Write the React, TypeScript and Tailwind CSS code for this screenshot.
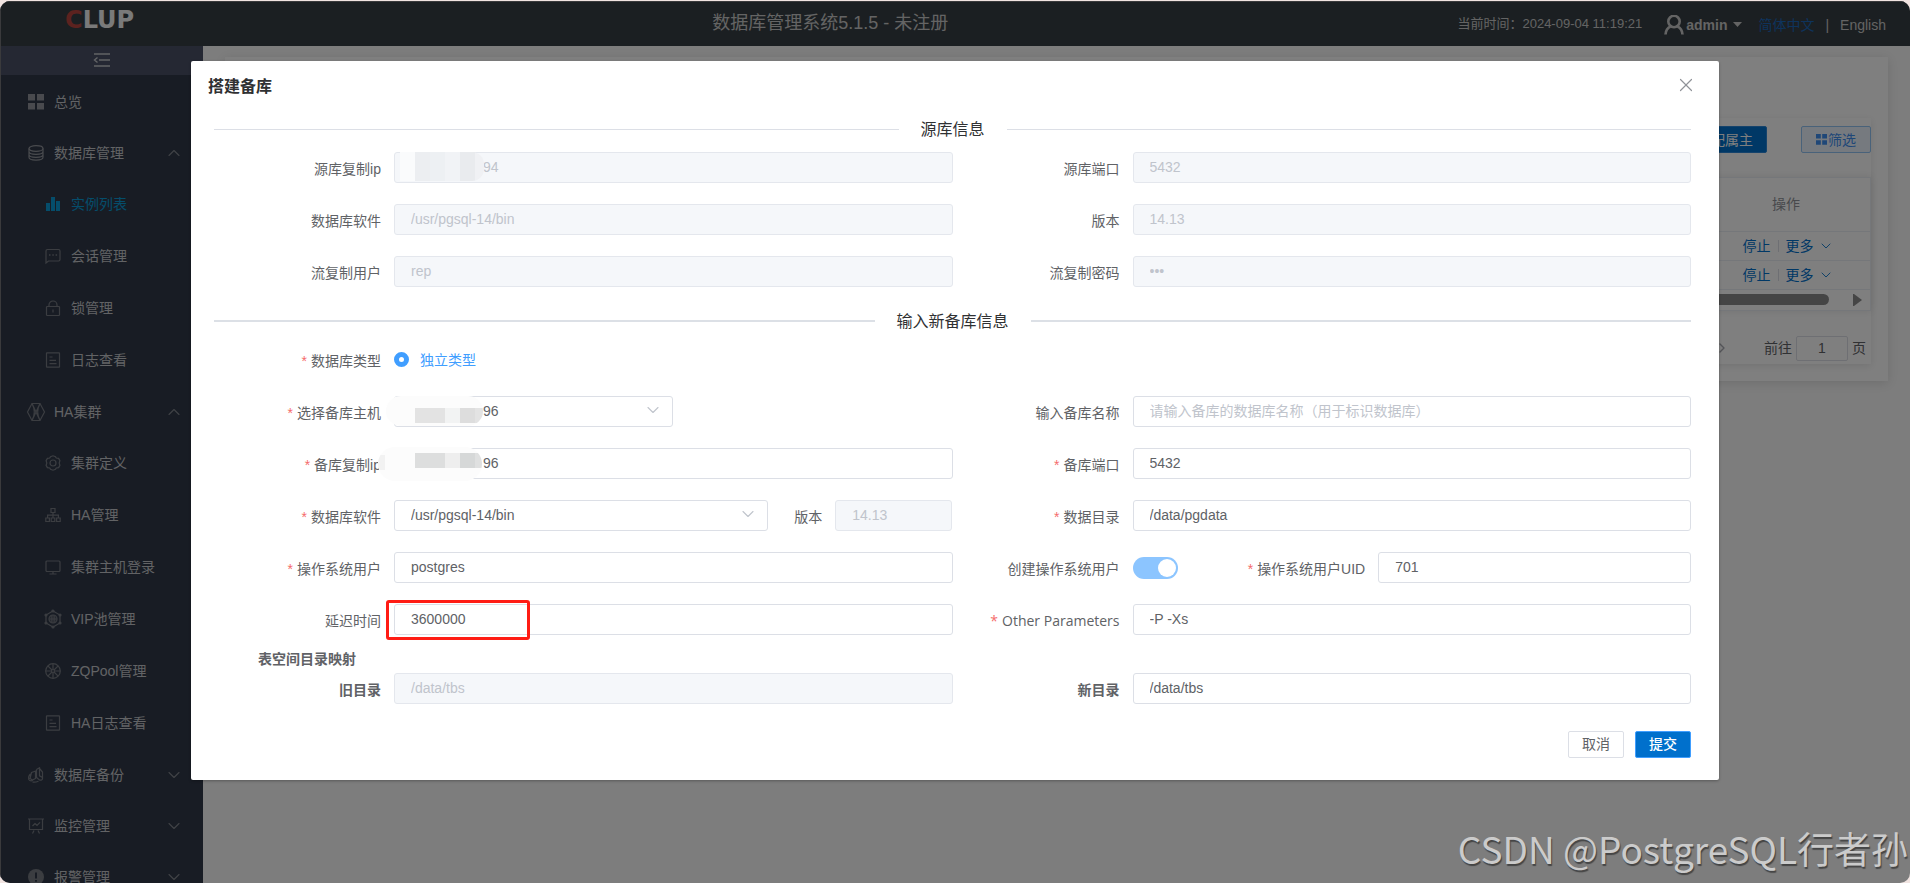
import type { ReactNode } from "react";
import { ChevronDown, ChevronRight, ChevronUp, X } from "lucide-react";
import clsx from "clsx";

const icons: Record<string, ReactNode> = {
  grid: <path d="M0 0h7v6.500H0zM9 0h7v6.500H9zM0 9h7v6.500H0zM9 9h7v6.500H9z" fill="currentColor" stroke="none" />,
  database: (
    <>
      <ellipse cx="8" cy="3.500" rx="7" ry="2.800" />
      <path d="M1 3.500v3c0 1.500 3 2.800 7 2.800s7-1.300 7-2.800v-3M1 6.500v3c0 1.500 3 2.800 7 2.800s7-1.300 7-2.800v-3M1 9.500v2.800c0 1.500 3 2.800 7 2.800s7-1.300 7-2.800V9.500" />
    </>
  ),
  bars: <path d="M1 7h4v8H1zM6 1h4v14H6zM11 5h4v10h-4z" fill="currentColor" stroke="none" />,
  chat: (
    <>
      <path d="M1 15V3a1.500 1.500 0 0 1 1.500-1.500h11A1.500 1.500 0 0 1 15 3v8.500a1.500 1.500 0 0 1-1.500 1.500H3.500z" />
      <path d="M4 7h1.500M7.300 7h1.500M10.600 7h1.500" strokeWidth="1.600" />
    </>
  ),
  lock: (
    <>
      <rect x="1.500" y="6.500" width="13" height="9" rx="0.800" />
      <path d="M4 6.500V5a4 4 0 0 1 8 0v1.500M8 9.500v3" />
    </>
  ),
  doc: (
    <>
      <rect x="1.500" y="0.800" width="13" height="14.400" rx="0.500" />
      <path d="M4.500 5h3M4.500 8.300h6.500M4.500 11.600h7" />
    </>
  ),
  cluster: (
    <>
      <path d="M4-.5h8L16.500 8 12 16.500H4L-.5 8z" />
      <path d="M4-.5l8 17M12-.5l-8 17M4-.5C7 5 7 11 4 16.500M12-.5C9 5 9 11 12 16.500" />
    </>
  ),
  gear: (
    <>
      <path d="M5.500 1.800 8 .8l2.500 1 .8 1.200 2.300.4 1.300 2.200-.7 2.400.7 2.400-1.300 2.200-2.300.4-.8 1.200-2.500 1-2.500-1-.8-1.200-2.300-.4L1.100 10.400 1.800 8l-.7-2.400 1.300-2.200 2.300-.4z" />
      <circle cx="8" cy="8" r="3" />
    </>
  ),
  tree: (
    <>
      <path d="M6 1.500h4v4H6zM.8 11h3.600v3.500H.8zM6.200 11h3.600v3.500H6.200zM11.600 11h3.600v3.500h-3.600z" />
      <path d="M8 5.500V11M2.600 11V8.200h10.800V11" />
    </>
  ),
  monitor: (
    <>
      <rect x="1" y="2" width="14" height="10.500" rx="1" />
      <path d="M8 12.500V15M4.500 15h7" />
    </>
  ),
  pool: (
    <>
      <path d="M8 0l7 4v8l-7 4-7-4V4z" />
      <circle cx="8" cy="8" r="4" />
      <path d="M4 8h8M8 4v8M6.200 4.500v7M9.800 4.500v7" />
      <g fill="currentColor">
        <circle cx="8" cy="0" r="1" />
        <circle cx="15" cy="4" r="1" />
        <circle cx="15" cy="12" r="1" />
        <circle cx="8" cy="16" r="1" />
        <circle cx="1" cy="12" r="1" />
        <circle cx="1" cy="4" r="1" />
      </g>
    </>
  ),
  wheel: (
    <>
      <circle cx="8" cy="8" r="7.300" />
      <circle cx="8" cy="8" r="1.500" />
      <path d="M8 .7v5.800M8 9.500v5.800M.7 8h5.800M9.500 8h5.800M2.800 2.800 7 7M9 9l4.200 4.200M13.200 2.800 9 7M7 9l-4.200 4.200" />
    </>
  ),
  backup: (
    <>
      <path d="M3.500 5.500 7.500 4v7.500l-3 1.500-2.500-1.500zM2.500 7C.8 8.500.3 10.500.8 12.500c.8 1.300 2.500 1.500 4 1M8.500 2.500l3-1.700v8l3.500 2M11.500 1.500l3 3.500v6.500c0 1.500-1.500 2-3 1.500l-3-2.500v-8M4.500 15c2 .5 4 0 6-.8" />
    </>
  ),
  board: (
    <>
      <path d="M0 1h16M1.500 1v10.500h13V1M4.500 15.500l1.500-3M11.500 15.500l-1.500-3" />
      <path d="M4.500 8 7 5.500l2 1.800L12 4.300" />
    </>
  ),
  alert: (
    <>
      <circle cx="8" cy="8" r="8" fill="currentColor" stroke="none" />
      <path d="M8 3.500v6M8 11v1.800" stroke="#303949" strokeWidth="2" />
    </>
  ),
};

function Icon({ name, className }: { name: string; className?: string }) {
  return (
    <svg viewBox="0 0 16 16" className={clsx("size-4 shrink-0 overflow-visible", className)} fill="none" stroke="currentColor" strokeWidth="1.200">
      {icons[name]}
    </svg>
  );
}

type MenuItem = { label: string; icon: string; sub?: boolean; active?: boolean; arrow?: "up" | "down"; bright?: boolean };

const menu: MenuItem[] = [
  { label: "总览", icon: "grid", bright: true },
  { label: "数据库管理", icon: "database", arrow: "up", bright: true },
  { label: "实例列表", icon: "bars", sub: true, active: true },
  { label: "会话管理", icon: "chat", sub: true },
  { label: "锁管理", icon: "lock", sub: true },
  { label: "日志查看", icon: "doc", sub: true },
  { label: "HA集群", icon: "cluster", arrow: "up" },
  { label: "集群定义", icon: "gear", sub: true },
  { label: "HA管理", icon: "tree", sub: true },
  { label: "集群主机登录", icon: "monitor", sub: true },
  { label: "VIP池管理", icon: "pool", sub: true },
  { label: "ZQPool管理", icon: "wheel", sub: true },
  { label: "HA日志查看", icon: "doc", sub: true },
  { label: "数据库备份", icon: "backup", arrow: "down" },
  { label: "监控管理", icon: "board", arrow: "down" },
  { label: "报警管理", icon: "alert", arrow: "down" },
];

function Sidebar() {
  return (
    <aside className="w-[203px] shrink-0 overflow-hidden bg-[#303949] text-[#c4c6ca]">
      <button type="button" aria-label="收起菜单" className="flex h-[29px] w-full items-center justify-center bg-[#4a5067] pb-px">
        <svg viewBox="0 0 18 14" className="h-3.5 w-[18px]" fill="none" stroke="currentColor" strokeWidth="1.400">
          <path d="M1 1h16M6 7h11M1 13h16M4.500 4.500 1.500 7l3 2.500" />
        </svg>
      </button>
      <nav className="pt-px">
        {menu.map((item) => (
          <a
            key={item.label}
            href="#"
            className={clsx(
              "flex items-center gap-[10px] pr-[19px]",
              item.sub ? "h-[52px] pl-[45px]" : "h-[51px] pl-7",
              item.active && "text-[#0a9ad6]"
            )}
          >
            <Icon name={item.icon} className={clsx(!item.active && (item.bright ? "text-[#92959c]" : "text-[#777b83]"))} />
            <span className="flex-1">{item.label}</span>
            {item.arrow === "up" && <ChevronUp className="size-5 text-[#80848c]" strokeWidth={1.3} />}
            {item.arrow === "down" && <ChevronDown className="size-5 text-[#80848c]" strokeWidth={1.3} />}
          </a>
        ))}
      </nav>
    </aside>
  );
}

function Header() {
  return (
    <header className="flex h-[45px] shrink-0 items-center bg-[#373f44] pr-6 text-[#c8c8c8]">
      <div className="w-[203px] pb-2 pl-[65px] font-['DejaVu_Sans'] text-2xl leading-6 font-bold text-[#f4f4f4]">
        <span className="text-[#b8443f]">C</span>LUP
      </div>
      <h1 className="flex-1 pb-0.5 text-center text-lg leading-6">数据库管理系统5.1.5 - 未注册</h1>
      <div className="flex items-center pt-0.5">
        <span className="text-[13px]">当前时间：2024-09-04 11:19:21</span>
        <button type="button" className="ml-[22px] flex items-center gap-0.5 font-bold">
          <svg viewBox="0 0 20 20" className="size-5" fill="none" stroke="currentColor" strokeWidth="2.600">
            <circle cx="10" cy="6.500" r="5.700" />
            <path d="M1.500 19.500c.3-4 2.200-6.800 5-8M18.500 19.500c-.3-4-2.200-6.800-5-8" />
          </svg>
          admin
          <svg viewBox="0 0 9 5" className="ml-1 h-[5px] w-[9px]" fill="currentColor">
            <path d="M0 0h9L4.500 5z" />
          </svg>
        </button>
        <a href="#" className="ml-4 text-[#1c66b8]">简体中文</a>
        <span className="mx-[11px]">|</span>
        <a href="#">English</a>
      </div>
    </header>
  );
}

function InstanceList() {
  return (
    <main className="min-w-0 flex-1 bg-[#fafafa] px-[22px] pt-[11px]">
      <section className="bg-white px-[17px] pt-[61px] pb-[17px] shadow-[0_2px_10px_rgba(0,0,0,0.12)]">
        <div className="pt-2 pb-[3px] shadow-[0_2px_8px_rgba(0,0,0,0.1)]">
          <div className="flex justify-end gap-[34px]">
            <button type="button" className="h-[27px] rounded-xs border border-[#2a86d8] bg-[#0070cc] px-[13px] text-white">分配属主</button>
            <button type="button" className="flex h-[27px] w-[70px] items-center justify-center gap-px rounded-xs border border-[#93c4f5] bg-[#ecf5ff] text-[#3f8ff0]">
              <Icon name="grid" className="size-[11px]!" />
              筛选
            </button>
          </div>
          <div className="mt-6 border border-[#ebeef5] shadow-[0_0_8px_rgba(0,0,0,0.1)]">
            <table className="w-full border-collapse text-center">
              <thead>
                <tr className="h-[53px] border-b border-[#ebeef5] text-[#909399]">
                  <td />
                  <th className="w-[168px] font-normal">操作</th>
                </tr>
              </thead>
              <tbody>
                {[1, 2].map((row) => (
                  <tr key={row} className="h-[29px] border-b border-[#ebeef5] text-[#0070cc]">
                    <td />
                    <td>
                      <div className="flex items-center justify-center pl-1">
                        <button type="button">停止</button>
                        <span className="mx-[7px] h-3 w-px bg-[#dcdfe6]" />
                        <button type="button" className="flex items-center gap-1">
                          更多
                          <ChevronDown className="size-4" strokeWidth={1.3} />
                        </button>
                      </div>
                    </td>
                  </tr>
                ))}
              </tbody>
            </table>
            <div className="flex h-5 items-center gap-6 pr-2">
              <div className="h-[11px] flex-1 rounded-full bg-[#8b8b8b]" />
              <svg viewBox="0 0 9 12" className="h-3 w-[9px]" fill="#8b8b8b">
                <path d="M0 0h1l8 6-8 6H0z" />
              </svg>
            </div>
          </div>
          <div className="mt-[25px] flex h-[25px] items-center justify-end pr-[5px] text-[#606266]">
            <ChevronRight className="mr-[34px] size-4 text-[#a8abb2]" />
            <label htmlFor="page">前往</label>
            <input id="page" defaultValue="1" className="mx-1 h-[25px] w-[52px] rounded-xs border border-[#dcdfe6] bg-white text-center" />
            <span>页</span>
          </div>
        </div>
      </section>
    </main>
  );
}

function Divider({ children, thick }: { children: ReactNode; thick?: boolean }) {
  const line = clsx("flex-1", thick ? "h-0.5 bg-[#dce0e6]" : "h-px bg-[#dcdfe6]");
  return (
    <div className="mb-[11px] flex h-6 items-center text-base text-[#303133]">
      <span className={line} />
      <h3 className="px-[22px] pt-0.5">{children}</h3>
      <span className={line} />
    </div>
  );
}

type LabelProps = { id: string; children: ReactNode; required?: boolean; bold?: boolean; className?: string };

function Label({ id, children, required, bold, className = "w-[180px]" }: LabelProps) {
  return (
    <label htmlFor={id} className={clsx("shrink-0 pt-[3px] pr-[13px] text-right whitespace-nowrap", bold && "font-bold", className)}>
      {required && <span className="mr-1 text-[#f56c6c]">*</span>}
      {children}
    </label>
  );
}

type InputProps = { id: string; value?: string; disabled?: boolean; placeholder?: string; type?: string; pad?: string; className?: string };

function Input({ id, value, disabled, placeholder, type = "text", pad = "pl-4", className = "w-full" }: InputProps) {
  return (
    <input
      id={id}
      type={type}
      defaultValue={value}
      disabled={disabled}
      placeholder={placeholder}
      className={clsx(
        "h-[31px] min-w-0 rounded-[3px] border pr-4 pb-0.5 placeholder:text-[#c0c4cc]",
        disabled ? "border-[#e4e7ed] bg-[#f5f7fa] text-[#c0c4cc]" : "border-[#dcdfe6] bg-white",
        pad,
        className
      )}
    />
  );
}

function Select({ id, value, pad = "pl-4", className }: { id: string; value: string; pad?: string; className: string }) {
  return (
    <div className={clsx("relative", className)}>
      <select id={id} className={clsx("h-[31px] w-full appearance-none rounded-[3px] border border-[#dcdfe6] bg-white pb-0.5", pad)}>
        <option>{value}</option>
      </select>
      <ChevronDown className="pointer-events-none absolute top-1 right-2.5 size-5 text-[#c0c4cc]" strokeWidth={1.3} />
    </div>
  );
}

function Field({ id, label, required, bold, children }: { id: string; label: string; required?: boolean; bold?: boolean; children: ReactNode }) {
  return (
    <div className="flex h-[31px] items-center">
      <Label id={id} required={required} bold={bold}>{label}</Label>
      <div className="relative flex min-w-0 flex-1 items-center">{children}</div>
    </div>
  );
}

/* Hides the leading part of an address */
function Mask({ blocks, className }: { blocks: string[]; className: string }) {
  return (
    <span className={clsx("pointer-events-none absolute flex overflow-hidden", className)}>
      {blocks.map((block, index) => (
        <span key={index} className={block} />
      ))}
    </span>
  );
}

function StandbyDialog() {
  return (
    <section role="dialog" aria-label="搭建备库" className="mt-[60px] w-4/5 rounded-xs bg-white pr-7 pb-[22px] pl-[23px] text-[#606266] shadow-[0_1px_3px_rgba(0,0,0,0.3)]">
      <header className="-ml-1.5 flex items-start justify-between pt-[13px]">
        <h2 className="pt-px text-base leading-6 font-bold text-[#303133]">搭建备库</h2>
        <button type="button" aria-label="关闭" className="-mr-1.5">
          <X className="size-[22px] text-[#909399]" strokeWidth={1.3} />
        </button>
      </header>

      <form className="mt-[18px]">
        <Divider>源库信息</Divider>
        <div className="grid grid-cols-2 gap-y-[21px]">
          <Field id="src-ip" label="源库复制ip">
            <Input id="src-ip" value="94" disabled pad="pl-[88px]" />
            <Mask
              className="top-0 left-1.5 h-[29px] w-[84px] rounded-r-xl"
              blocks={["w-[15px] bg-[#fafbfc]", "w-[15px] bg-[#eceef1]", "w-[15px] bg-[#edf0f3]", "w-[15px] bg-[#f1f3f6]", "w-[15px] bg-[#e9ebee]", "flex-1 bg-[#f0f1f4]"]}
            />
          </Field>
          <Field id="src-port" label="源库端口">
            <Input id="src-port" value="5432" disabled />
          </Field>
          <Field id="src-soft" label="数据库软件">
            <Input id="src-soft" value="/usr/pgsql-14/bin" disabled />
          </Field>
          <Field id="src-version" label="版本">
            <Input id="src-version" value="14.13" disabled />
          </Field>
          <Field id="rep-user" label="流复制用户">
            <Input id="rep-user" value="rep" disabled />
          </Field>
          <Field id="rep-pass" label="流复制密码">
            <Input id="rep-pass" type="password" value="rep" disabled />
          </Field>
        </div>

        <div className="h-[22px]" />
        <Divider thick>输入新备库信息</Divider>
        <div className="grid grid-cols-2 gap-y-[21px]">
          <Field id="db-type" label="数据库类型" required>
            <input id="db-type" type="radio" defaultChecked className="size-[15px] appearance-none rounded-full border-[5px] border-[#409eff] bg-white" />
            <label htmlFor="db-type" className="pl-[11px] text-[#409eff]">独立类型</label>
          </Field>
          <div />
          <Field id="host" label="选择备库主机" required>
            <Select id="host" value="96" pad="pl-[88px]" className="w-1/2" />
            <Mask
              className="top-0 -left-2 h-[30px] w-[97px] items-center rounded-full bg-[#fcfcfc]"
              blocks={["w-[29px]", "mt-2 h-[15px] w-[30px] bg-[#e3e3e3]", "mt-2 h-[15px] w-[15px] bg-[#f2f3f3]", "mt-2 h-[15px] w-[15px] bg-[#dddddd]", "mt-2 h-[15px] w-2 bg-[#e3e3e3]"]}
            />
          </Field>
          <Field id="name" label="输入备库名称">
            <Input id="name" placeholder="请输入备库的数据库名称（用于标识数据库）" />
          </Field>
          <Field id="ip" label="备库复制ip" required>
            <Input id="ip" value="96" pad="pl-[88px]" />
            <Mask
              className="-top-px -left-4 h-[34px] w-[104px] items-start rounded-full bg-[#fcfcfc]"
              blocks={["mt-2 h-[15px] w-[7px] bg-[#f2f2f2]", "w-[30px]", "mt-1.5 h-[15px] w-[30px] bg-[#dddede]", "mt-1.5 h-[15px] w-[15px] bg-[#eeeeee]", "mt-1.5 h-[15px] w-[15px] bg-[#d6d8d8]", "mt-1.5 h-[15px] w-[7px] bg-[#dfe0e0]"]}
            />
          </Field>
          <Field id="port" label="备库端口" required>
            <Input id="port" value="5432" />
          </Field>
          <Field id="soft" label="数据库软件" required>
            <Select id="soft" value="/usr/pgsql-14/bin" className="w-[67%]" />
            <Label id="version" className="w-[12%]">版本</Label>
            <Input id="version" value="14.13" disabled className="w-[21%]" />
          </Field>
          <Field id="data-dir" label="数据目录" required>
            <Input id="data-dir" value="/data/pgdata" />
          </Field>
          <Field id="os-user" label="操作系统用户" required>
            <Input id="os-user" value="postgres" />
          </Field>
          <Field id="create-user" label="创建操作系统用户">
            <input
              id="create-user"
              type="checkbox"
              role="switch"
              defaultChecked
              className="flex h-[22px] w-[45px] shrink-0 appearance-none items-center justify-end rounded-full bg-[#8cc5ff] px-0.5 before:size-[18px] before:rounded-full before:bg-white"
            />
            <Label id="uid" required className="flex-1">操作系统用户UID</Label>
            <Input id="uid" value="701" className="w-[56%]" />
          </Field>
          <Field id="delay" label="延迟时间">
            <Input id="delay" value="3600000" />
            <span className="pointer-events-none absolute -top-1 -left-2 h-10 w-36 rounded-[3px] border-3 border-[#ff1c14]" />
          </Field>
          <div className="flex h-[31px] items-center">
            <Label id="params" required className="w-[180px] font-['Open_Sans']">Other Parameters</Label>
            <Input id="params" value="-P -Xs" />
          </div>
        </div>

        <h4 className="mt-3.5 mb-1 pl-11 leading-5 font-bold">表空间目录映射</h4>
        <div className="grid grid-cols-2">
          <Field id="old-dir" label="旧目录" bold>
            <Input id="old-dir" value="/data/tbs" disabled />
          </Field>
          <Field id="new-dir" label="新目录" bold>
            <Input id="new-dir" value="/data/tbs" />
          </Field>
        </div>

        <div className="mt-[27px] flex justify-end gap-[11px]">
          <button type="button" className="h-[27px] w-14 rounded-xs border border-[#dcdfe6] bg-white pb-px">取消</button>
          <button type="button" className="h-[27px] w-14 rounded-xs border border-[#409eff] bg-[#0070cc] pb-px font-medium text-white">提交</button>
        </div>
      </form>
    </section>
  );
}

export default function App() {
  return (
    <div className="flex h-screen flex-col bg-[#f1e4e1] pt-px font-['Liberation_Sans','Noto_Sans_CJK_SC',sans-serif] text-sm">
      <div className="relative flex min-h-0 flex-1 flex-col overflow-hidden rounded-[10px]">
        <Header />
        <div className="flex min-h-0 flex-1">
          <Sidebar />
          <InstanceList />
        </div>
        <div className="absolute inset-0 flex items-start justify-center bg-black/50 shadow-[inset_1px_1px_0_#3a3a3c]">
          <StandbyDialog />
        </div>
        <p className="pointer-events-none absolute right-0.5 bottom-2 font-['Noto_Sans_CJK_SC',sans-serif] text-[37px] leading-[54px] text-[#cbcbcb] [text-shadow:1px_2px_1px_rgba(0,0,0,0.45)]">
          CSDN @PostgreSQL行者孙
        </p>
      </div>
    </div>
  );
}
